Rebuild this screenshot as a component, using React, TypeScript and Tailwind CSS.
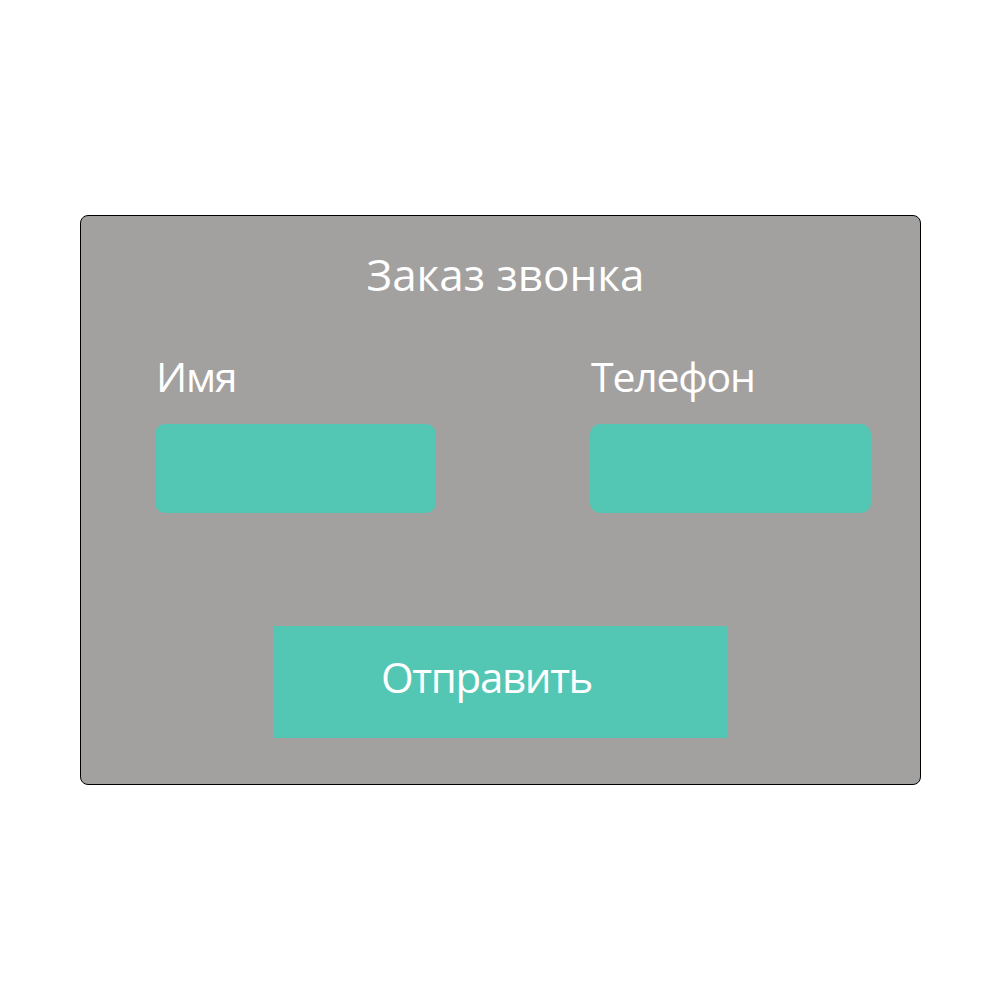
export default function App() {
  return (
    <div className="w-[1000px] h-[1000px] bg-white pt-[215px] pl-[80px] font-['Open_Sans',sans-serif] text-white">
      <div className="w-[841px] h-[570px] rounded-[8px] border border-black bg-[#a3a19f] flex flex-col">
        <h1 className="mt-[36px] h-[44px] text-[44px] leading-none text-center pl-[10px]">Заказ звонка</h1>

        <div className="mt-[60px] pl-[74px] grid grid-cols-[281px_281px] gap-x-[154px]">
          <div className="flex flex-col">
            <label className="h-[43px] pl-[1px] text-[41px] leading-none tracking-[-1.2px]">Имя</label>
            <div className="mt-[25px] h-[89px] rounded-[10px] bg-[#53c6b4]" />
          </div>
          <div className="flex flex-col">
            <label className="h-[43px] pl-[1px] text-[41px] leading-none tracking-[-1.2px]">Телефон</label>
            <div className="mt-[25px] h-[89px] rounded-[10px] bg-[#53c6b4]" />
          </div>
        </div>

        <button className="mt-[113px] ml-[192px] w-[455px] h-[112px] bg-[#53c6b4] text-[42px] leading-none tracking-[-1.3px] pr-[28px] pb-[10px]">
          Отправить
        </button>
      </div>
    </div>
  );
}
